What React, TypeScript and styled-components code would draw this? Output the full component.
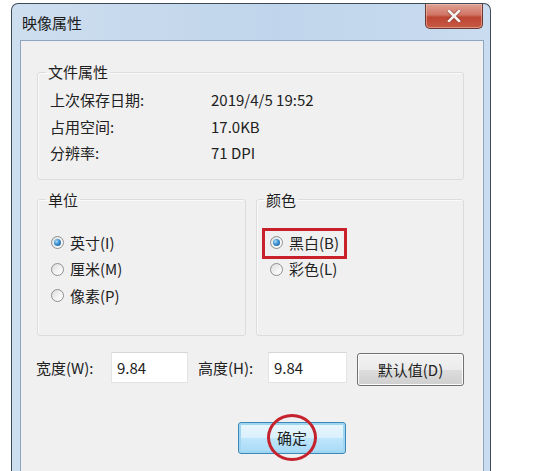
import React from "react";
import styled, { createGlobalStyle } from "styled-components";

const Global = createGlobalStyle`
  html, body { margin: 0; padding: 0; background: #ffffff; }
  body {
    width: 544px; height: 471px; overflow: hidden;
    font-family: "Noto Sans CJK SC", "Liberation Sans", sans-serif;
    font-size: 15px; color: #222;
  }
  * { box-sizing: border-box; }
`;

const Window = styled.div`
  margin: 3px 0 0 11px;
  width: 480px;
  height: 468px;
  border: 1px solid #3e4a58;
  border-bottom: none;
  border-radius: 7px 7px 0 0;
  background: linear-gradient(90deg, #cddeef 0%, #c0d5eb 55%, #c9dcf0 100%);
  padding: 0 6px 0 8px;
  display: flex;
  flex-direction: column;
`;

const TitleBar = styled.div`
  height: 36px;
  display: flex;
  justify-content: space-between;
  align-items: flex-start;
  flex-shrink: 0;
`;

const Title = styled.div`
  margin: 9px 0 0 2px;
  font-size: 15px;
  line-height: 20px;
  color: #1b1b1b;
`;

const CloseButton = styled.div`
  width: 58px;
  height: 25px;
  margin-right: 1px;
  border: 1px solid #6b3a33;
  border-top: none;
  border-radius: 0 0 5px 5px;
  background: linear-gradient(180deg, #dfa196 0%, #d17565 45%, #bd4533 55%, #c65a44 100%);
  box-shadow: inset 0 0 0 1px rgba(255, 210, 200, 0.45);
  display: flex;
  align-items: center;
  justify-content: center;
`;

const Client = styled.div`
  flex: 1;
  background: #f0f0f0;
  border: 1px solid #8ea6c2;
  border-bottom: none;
  padding: 22px 19px 0 16px;
  display: flex;
  flex-direction: column;
`;

const Group = styled.fieldset<{ $pl: number; $pt: number; $pb: number }>`
  margin: 0;
  min-width: 0;
  border: 1px solid #dcdcdc;
  border-radius: 3px;
  box-shadow: inset 1px 1px 0 #fbfbfb;
  padding: ${(p) => p.$pt}px 6px ${(p) => p.$pb}px ${(p) => p.$pl}px;
`;

const Legend = styled.legend<{ $ml: number }>`
  font-size: 15px;
  line-height: 18px;
  padding: 0 2px;
  margin-left: ${(p) => p.$ml}px;
  color: #1e1e1e;
`;

const InfoGrid = styled.div`
  display: grid;
  grid-template-columns: 161px 1fr;
  grid-auto-rows: 26.5px;
  align-items: center;
  line-height: 20px;
`;

const GroupsRow = styled.div`
  margin-top: 11px;
  display: grid;
  grid-template-columns: 209px 1fr;
  column-gap: 10px;
`;

const RadioRow = styled.div`
  position: relative;
  height: 26.5px;
  display: flex;
  align-items: center;
  gap: 6px;
  line-height: 20px;
`;

const RadioCircle = styled.span<{ $on?: boolean }>`
  width: 13px;
  height: 13px;
  border-radius: 50%;
  border: 1px solid #8e8f8f;
  background: linear-gradient(135deg, #dcdcdc 0%, #f4f4f4 60%, #ffffff 100%);
  display: flex;
  align-items: center;
  justify-content: center;
  flex-shrink: 0;
  &::after {
    content: "";
    display: ${(p) => (p.$on ? "block" : "none")};
    width: 7px;
    height: 7px;
    border-radius: 50%;
    background: radial-gradient(circle at 35% 35%, #a8dcf7 0%, #3b8fd0 45%, #174f8a 100%);
  }
`;

const RedBox = styled.span`
  position: absolute;
  left: -8px;
  top: -2px;
  width: 85px;
  height: 31px;
  border: 3px solid #c8212b;
  pointer-events: none;
`;

const BottomRow = styled.div`
  margin-top: 16px;
  display: flex;
  align-items: flex-start;
  line-height: 20px;
`;

const FieldLabel = styled.span<{ $w: number; $ml?: number }>`
  width: ${(p) => p.$w}px;
  margin-left: ${(p) => p.$ml ?? 0}px;
  height: 31px;
  display: flex;
  align-items: center;
  flex-shrink: 0;
`;

const TextBox = styled.div<{ $w: number }>`
  width: ${(p) => p.$w}px;
  height: 31px;
  background: #ffffff;
  border: 1px solid #e2e4e7;
  border-top-color: #d4d6da;
  padding: 0 5px;
  display: flex;
  align-items: center;
  flex-shrink: 0;
`;

const PushButton = styled.div`
  margin: 1px 0 0 10px;
  width: 107px;
  height: 33px;
  border: 1px solid #707070;
  border-radius: 3px;
  background: linear-gradient(180deg, #f3f3f3 0%, #ebebeb 50%, #dddddd 51%, #cfcfcf 100%);
  box-shadow: inset 0 0 0 1px #fcfcfc;
  display: flex;
  align-items: center;
  justify-content: center;
`;

const OkRow = styled.div`
  margin-top: 36px;
  padding-left: 201px;
  display: flex;
`;

const OkButton = styled.div`
  position: relative;
  width: 108px;
  height: 32px;
  border: 1px solid #3c87b8;
  border-radius: 3px;
  background: linear-gradient(180deg, #eaf6fd 0%, #d9f0fc 50%, #bee6fd 51%, #a7d9f5 100%);
  box-shadow: inset 0 0 0 2px #9fd6f2;
  display: flex;
  align-items: center;
  justify-content: center;
  line-height: 20px;
`;

const RedCircle = styled.span`
  position: absolute;
  left: 28px;
  top: -9px;
  width: 50px;
  height: 47px;
  border: 3px solid #c4222c;
  border-radius: 50%;
  pointer-events: none;
`;

export default function App() {
  return (
    <>
      <Global />
      <Window>
        <TitleBar>
          <Title>映像属性</Title>
          <CloseButton>
            <svg width="14" height="12" viewBox="0 0 14 12">
              <path d="M2 1 L12 11 M12 1 L2 11" stroke="#5a1a12" strokeWidth="4.2" strokeLinecap="square" opacity="0.45" />
              <path d="M2 1 L12 11 M12 1 L2 11" stroke="#f4f1f0" strokeWidth="2.6" strokeLinecap="square" />
            </svg>
          </CloseButton>
        </TitleBar>
        <Client>
          <Group $pl={12} $pt={6} $pb={12}>
            <Legend $ml={-4}>文件属性</Legend>
            <InfoGrid>
              <span>上次保存日期:</span>
              <span>2019/4/5 19:52</span>
              <span>占用空间:</span>
              <span>17.0KB</span>
              <span>分辨率:</span>
              <span>71 DPI</span>
            </InfoGrid>
          </Group>
          <GroupsRow>
            <Group $pl={13} $pt={21} $pb={26}>
              <Legend $ml={-5}>单位</Legend>
              <RadioRow>
                <RadioCircle $on />
                英寸(I)
              </RadioRow>
              <RadioRow>
                <RadioCircle />
                厘米(M)
              </RadioRow>
              <RadioRow>
                <RadioCircle />
                像素(P)
              </RadioRow>
            </Group>
            <Group $pl={13} $pt={21} $pb={26}>
              <Legend $ml={-6}>颜色</Legend>
              <RadioRow>
                <RedBox />
                <RadioCircle $on />
                黑白(B)
              </RadioRow>
              <RadioRow>
                <RadioCircle />
                彩色(L)
              </RadioRow>
            </Group>
          </GroupsRow>
          <BottomRow>
            <FieldLabel $w={75} $ml={-1}>宽度(W):</FieldLabel>
            <TextBox $w={77}>9.84</TextBox>
            <FieldLabel $w={70} $ml={10}>高度(H):</FieldLabel>
            <TextBox $w={79}>9.84</TextBox>
            <PushButton>默认值(D)</PushButton>
          </BottomRow>
          <OkRow>
            <OkButton>
              确定
              <RedCircle />
            </OkButton>
          </OkRow>
        </Client>
      </Window>
    </>
  );
}
